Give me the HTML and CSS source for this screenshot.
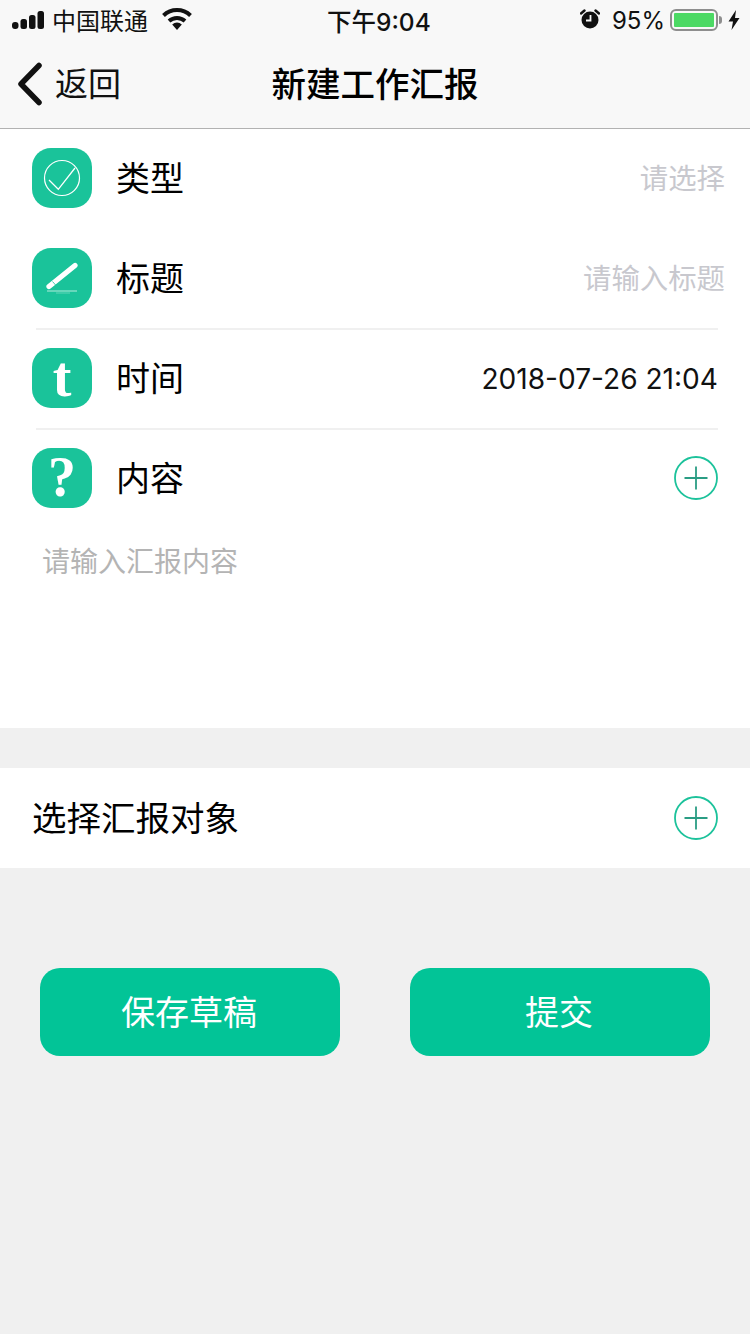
FILE: index.html
```html
<!DOCTYPE html>
<html>
<head>
    <meta charset="UTF-8">
    <title>新建工作汇报</title>
    <link rel="stylesheet" href="styles.css">
</head>
<body>

<div class="m-head">
    <div class="u-status">
        <div class="status-left">
            <svg class="ic-signal" width="33" height="18" viewBox="0 0 33 18"><rect x="0" y="11" width="6.500" height="7" rx="3"/><rect x="8.500" y="8" width="6.500" height="10" rx="2.500"/><rect x="17" y="4" width="6.500" height="14" rx="2.500"/><rect x="25.500" y="0" width="6.500" height="18" rx="2.500"/></svg>
            <span class="carrier">中国联通</span>
            <svg class="ic-wifi" width="30" height="22" viewBox="0 0 30 22"><path d="M1.500 7.500a19.500 19.500 0 0 1 27 0" fill="none" stroke="#111" stroke-width="4"/><path d="M7 13a12 12 0 0 1 16 0" fill="none" stroke="#111" stroke-width="4"/><path d="M15 22l-4.800-5.500a7 7 0 0 1 9.600 0z" fill="#111"/></svg>
        </div>
        <div class="status-time">下午9:04</div>
        <div class="status-right">
            <svg class="ic-alarm" width="20" height="20" viewBox="0 0 20 20"><circle cx="10" cy="11" r="8.500" fill="#111"/><path d="M10.500 6v5.500H6" fill="none" stroke="#f8f8f8" stroke-width="1.800"/><path d="M1 4.500L4.500 1.500M19 4.500L15.500 1.500" stroke="#111" stroke-width="2.400" stroke-linecap="round"/></svg>
            <span class="battery-num">95%</span>
            <div class="battery"><div class="battery-in"></div></div>
            <div class="battery-cap"></div>
            <svg class="ic-bolt" width="12" height="20" viewBox="0 0 12 20"><path d="M8 0L0.500 11.500h4.500L3.500 20 11.500 8H7z" fill="#111"/></svg>
        </div>
    </div>
    <div class="u-nav">
        <a href="javascript:;" class="nav-back">
            <svg width="28" height="44" viewBox="0 0 28 44"><path d="M23 3.500L5 22l18 18.500" fill="none" stroke="#111" stroke-width="5.500" stroke-linecap="round" stroke-linejoin="round"/></svg>
            <span>返回</span>
        </a>
        <div class="nav-title">新建工作汇报</div>
    </div>
</div>

<div class="m-form">
    <div class="u-row">
        <div class="u-icon">
            <svg width="60" height="60" viewBox="0 0 60 60"><circle cx="30" cy="30" r="17.500" fill="none" stroke="#fff" stroke-width="1.200"/><path d="M17 32l9.300 9.300L43 20" fill="none" stroke="#fff" stroke-width="1.300"/></svg>
        </div>
        <div class="row-label">类型</div>
        <div class="row-hint">请选择</div>
    </div>
    <div class="u-row line">
        <div class="u-icon">
            <svg width="60" height="60" viewBox="0 0 60 60"><path d="M17 38.500L43 17.500" fill="none" stroke="#fff" stroke-width="5.200" stroke-linecap="round"/><path d="M20.500 33.500l3.500 4" stroke="#1cc29b" stroke-width="0.800"/><path d="M15 43h30" stroke="#fff" stroke-width="0.900" opacity="0.750"/><path d="M24 45h14" stroke="#fff" stroke-width="0.700" opacity="0.450"/></svg>
        </div>
        <div class="row-label">标题</div>
        <div class="row-hint">请输入标题</div>
    </div>
    <div class="u-row line">
        <div class="u-icon"><span class="icon-char">t</span></div>
        <div class="row-label">时间</div>
        <div class="row-value">2018-07-26 21:04</div>
    </div>
    <div class="u-row">
        <div class="u-icon"><span class="icon-char">?</span></div>
        <div class="row-label">内容</div>
        <svg class="ic-add" width="44" height="44" viewBox="0 0 44 44"><circle cx="22" cy="22" r="21" fill="none" stroke="#1cc29b" stroke-width="1.800"/><path d="M22 10.500v23M10.500 22h23" stroke="#2a9d84" stroke-width="1.800"/></svg>
    </div>
    <div class="u-content">请输入汇报内容</div>
</div>

<div class="m-target">
    <div class="target-label">选择汇报对象</div>
    <svg class="ic-add" width="44" height="44" viewBox="0 0 44 44"><circle cx="22" cy="22" r="21" fill="none" stroke="#1cc29b" stroke-width="1.800"/><path d="M22 10.500v23M10.500 22h23" stroke="#2a9d84" stroke-width="1.800"/></svg>
</div>

<div class="m-btns">
    <a href="javascript:;" class="u-btn">保存草稿</a>
    <a href="javascript:;" class="u-btn">提交</a>
</div>

</body>
</html>
```

FILE: styles.css
```css
*{ margin: 0; padding: 0; text-decoration: none; box-sizing: border-box;}
html,body {width: 750px;height: 1334px;overflow: hidden;}
body {background: #f0f0f0;color: #000;font-family: Inter, "Noto Sans CJK SC", sans-serif;}

.m-head {height: 129px;background: #f8f8f8;border-bottom: 1px solid #b2b2b2;position: relative;z-index: 2;}
.u-status {height: 40px;display: flex;align-items: center;padding: 0 10px 0 12px;font-size: 24px;color: #111;}
.status-left {display: flex;align-items: center;width: 315px;}
.ic-signal {fill: #111;margin-right: 7px;}
.carrier {margin-top: -1px;}
.ic-wifi {margin-left: 14px;margin-bottom: 2px;}
.status-time {font-weight: 500;font-size: 24.500px;white-space: nowrap;}
.status-right {display: flex;align-items: center;flex: 1;justify-content: flex-end;}
.ic-alarm {margin-right: 12px;margin-bottom: 2px;}
.battery-num {margin-right: 5px;white-space: nowrap;}
.battery {width: 48px;height: 22px;border: 2px solid #8e8e8e;border-radius: 6px;padding: 2px;}
.battery-in {width: 40px;height: 14px;background: #4cd964;border-radius: 1px;}
.battery-cap {width: 3px;height: 8px;background: #8e8e8e;border-radius: 0 3px 3px 0;margin: 0 6px 0 1px;}
.u-nav {height: 88px;display: flex;align-items: center;justify-content: center;position: relative;}
.nav-back {position: absolute;left: 16px;top: 22px;display: flex;align-items: center;color: #111;font-size: 33px;height: 44px;}
.nav-back svg {margin-right: 11px;}
.nav-back span {padding-bottom: 4px;}
.nav-title {font-size: 34.500px;font-weight: 500;color: #000;padding-bottom: 4px;}

.m-form {height: 600px;margin-top: -1px;background: #fff;}
.u-row {height: 100px;padding: 0 32px;display: flex;align-items: center;position: relative;}
.u-row.line::after {content: "";position: absolute;left: 36px;right: 32px;bottom: -2px;height: 2px;background: #f0f0f0;z-index: 1;}
.u-icon {width: 60px;height: 60px;border-radius: 19px;background: #1ac39a;display: flex;align-items: center;justify-content: center;flex-shrink: 0;}
.icon-char {font-family: "Liberation Serif", serif;font-weight: bold;font-size: 56px;line-height: 56px;color: #fff;margin-top: -3px;}
.row-label {font-size: 34px;margin-left: 24px;flex: 1;padding-bottom: 4px;}
.row-hint {font-size: 28.400px;color: #c8c8ce;margin-right: -7px;padding-bottom: 4px;}
.row-value {font-size: 28.100px;color: #111;padding-top: 2px;}
.u-content {padding: 12px 42px 0;font-size: 28px;color: #b4b4b4;}

.m-target {height: 100px;margin-top: 40px;background: #fff;padding: 0 32px 0 32px;display: flex;align-items: center;justify-content: space-between;}
.target-label {font-size: 34.500px;color: #000;padding-bottom: 4px;}

.m-btns {display: flex;justify-content: space-between;padding: 100px 40px 0;}
.u-btn {width: 300px;height: 88px;border-radius: 20px;background: #02c497;color: #fff;font-size: 34px;padding: 0 2px 4px 0;display: flex;align-items: center;justify-content: center;}
```
